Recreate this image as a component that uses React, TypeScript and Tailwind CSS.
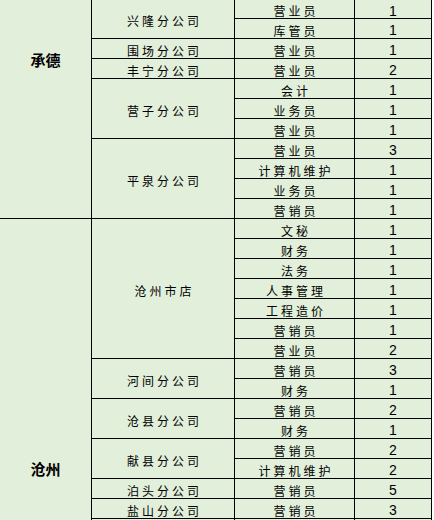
import React from "react";

type Row = { job: string; n: string };
type Branch = { name: string; rows: Row[] };

const chengde: Branch[] = [
  { name: "兴隆分公司", rows: [{ job: "营业员", n: "1" }, { job: "库管员", n: "1" }] },
  { name: "围场分公司", rows: [{ job: "营业员", n: "1" }] },
  { name: "丰宁分公司", rows: [{ job: "营业员", n: "2" }] },
  {
    name: "营子分公司",
    rows: [
      { job: "会计", n: "1" },
      { job: "业务员", n: "1" },
      { job: "营业员", n: "1" },
    ],
  },
  {
    name: "平泉分公司",
    rows: [
      { job: "营业员", n: "3" },
      { job: "计算机维护", n: "1" },
      { job: "业务员", n: "1" },
      { job: "营销员", n: "1" },
    ],
  },
];

const cangzhou: Branch[] = [
  {
    name: "沧州市店",
    rows: [
      { job: "文秘", n: "1" },
      { job: "财务", n: "1" },
      { job: "法务", n: "1" },
      { job: "人事管理", n: "1" },
      { job: "工程造价", n: "1" },
      { job: "营销员", n: "1" },
      { job: "营业员", n: "2" },
    ],
  },
  { name: "河间分公司", rows: [{ job: "营销员", n: "3" }, { job: "财务", n: "1" }] },
  { name: "沧县分公司", rows: [{ job: "营销员", n: "2" }, { job: "财务", n: "1" }] },
  { name: "献县分公司", rows: [{ job: "营销员", n: "2" }, { job: "计算机维护", n: "2" }] },
  { name: "泊头分公司", rows: [{ job: "营销员", n: "5" }] },
  { name: "盐山分公司", rows: [{ job: "营销员", n: "3" }] },
  { name: "", rows: [{ job: "", n: "" }] },
];

const cjk = "font-['Noto_Sans_CJK_SC','Noto_Sans',sans-serif] text-black";
const num = "font-['Liberation_Sans',Arial,sans-serif] text-black";

export default function App() {
  const cells: React.ReactNode[] = [];
  let r = 1;
  const groups: { title: string; branches: Branch[]; pt: string }[] = [
    { title: "承德", branches: chengde, pt: "pt-[52px]" },
    { title: "沧州", branches: cangzhou, pt: "pt-[242px]" },
  ];
  groups.forEach((g, gi) => {
    const total = g.branches.reduce((s, b) => s + b.rows.length, 0);
    cells.push(
      <div
        key={"g" + gi}
        className={`col-start-1 bg-[#E2EFDA] flex justify-center items-start ${g.pt}`}
        style={{ gridRow: `${r} / span ${total}` }}
      >
        <span className={`text-[15px] font-bold leading-[16px] ${cjk}`}>{g.title}</span>
      </div>
    );
    g.branches.forEach((b, bi) => {
      cells.push(
        <div
          key={`b${gi}-${bi}`}
          className="col-start-2 bg-[#E2EFDA] flex justify-center items-center pt-[4px] pl-[3px]"
          style={{ gridRow: `${r} / span ${b.rows.length}` }}
        >
          <span className={`text-[12px] leading-[14px] tracking-[3px] ${cjk}`}>{b.name}</span>
        </div>
      );
      b.rows.forEach((row, ri) => {
        cells.push(
          <div
            key={`j${gi}-${bi}-${ri}`}
            className="col-start-3 bg-[#E2EFDA] flex justify-center items-center pt-[4px] pl-[3px]"
            style={{ gridRow: r }}
          >
            <span className={`text-[12px] leading-[14px] tracking-[3px] ${cjk}`}>{row.job}</span>
          </div>
        );
        cells.push(
          <div
            key={`n${gi}-${bi}-${ri}`}
            className="col-start-4 bg-[#E2EFDA] flex justify-center items-center pt-[3px]"
            style={{ gridRow: r }}
          >
            <span className={`text-[14px] leading-[14px] ${num}`}>{row.n}</span>
          </div>
        );
        r++;
      });
    });
  });

  return (
    <div className="w-[434px] h-[520px] overflow-hidden bg-white">
      <div className="grid gap-px bg-black w-[432px] border-r border-black grid-cols-[91px_142px_119px_76px] grid-rows-[18px_repeat(26,19px)]">
        {cells}
      </div>
    </div>
  );
}
